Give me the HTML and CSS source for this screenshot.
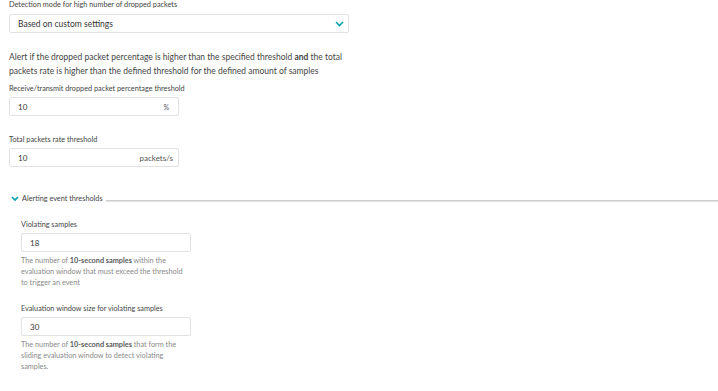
FILE: index.html
```html
<!DOCTYPE html>
<html>
<head>
<meta charset="utf-8">
<link rel="stylesheet" href="styles.css">
</head>
<body>
<div class="page">
  <div class="label">Detection mode for high number of dropped packets</div>
  <div class="select">
    <span>Based on custom settings</span>
    <svg class="chev" width="9" height="6" viewBox="0 0 9 6"><path d="M1 1 L4.5 4.5 L8 1" fill="none" stroke="#00a1b2" stroke-width="1.6"/></svg>
  </div>
  <p class="desc">Alert if the dropped packet percentage is higher than the specified threshold <b>and</b> the total packets rate is higher than the defined threshold for the defined amount of samples</p>

  <div class="label l2">Receive/transmit dropped packet percentage threshold</div>
  <div class="input narrow"><span>10</span><span class="unit">%</span></div>

  <div class="label l3">Total packets rate threshold</div>
  <div class="input narrow"><span>10</span><span class="unit big">packets/s</span></div>

  <div class="section">
    <svg class="schev" width="8" height="6" viewBox="0 0 8 6"><path d="M1 1 L4 4 L7 1" fill="none" stroke="#00a1b2" stroke-width="1.6"/></svg>
    <span class="stitle">Alerting event thresholds</span>
    <span class="rule"></span>
  </div>

  <div class="sub">
    <div class="label s1">Violating samples</div>
    <div class="input sub-in"><span>18</span></div>
    <p class="help">The number of <b>10-second samples</b> within the evaluation window that must exceed the threshold to trigger an event</p>

    <div class="label s2">Evaluation window size for violating samples</div>
    <div class="input sub-in"><span>30</span></div>
    <p class="help">The number of <b>10-second samples</b> that form the sliding evaluation window to detect violating samples.</p>
  </div>
</div>
</body>
</html>
```
FILE: styles.css
```css
html, body {
  margin: 0;
  padding: 0;
  background: #ffffff;
}
body {
  font-family: Lato, "Open Sans", sans-serif;
  color: #454646;
}
.page {
  padding: 0 0 0 9px;
}
.label {
  font-size: 7.3px;
  line-height: 10px;
  height: 10px;
  margin-bottom: 4px;
  color: #454646;
}
.select {
  box-sizing: border-box;
  width: 340px;
  height: 19px;
  border: 1px solid #e2e2e2;
  border-radius: 2px;
  display: flex;
  align-items: center;
  justify-content: space-between;
  padding: 0 4px 0 8px;
  font-size: 8.5px;
  color: #353535;
}
.chev {
  display: block;
}
.desc {
  margin: 17px 0 0 0;
  width: 345px;
  font-size: 8.5px;
  line-height: 14px;
  color: #454646;
}
.desc b {
  font-weight: 700;
}
.l2 {
  margin-top: 6px;
}
.input {
  box-sizing: border-box;
  height: 19px;
  border: 1px solid #e2e2e2;
  border-radius: 2px;
  display: flex;
  align-items: center;
  justify-content: space-between;
  padding: 0 5px 0 8px;
  font-size: 8px;
  color: #353535;
}
.l2 + .input {
  margin-top: -1px;
}
.narrow {
  width: 170px;
}
.unit {
  font-size: 7px;
  padding-right: 4px;
  color: #555;
}
.unit.big {
  font-size: 8px;
  padding-right: 0;
}
.l3 {
  margin-top: 19px;
}
.l3 + .input {
  margin-top: -1px;
}
.section {
  margin-top: 27px;
  height: 10px;
  display: flex;
  align-items: center;
  padding-left: 2px;
}
.schev {
  display: block;
  margin-right: 3px;
}
.stitle {
  font-size: 7.3px;
  line-height: 10px;
  color: #454646;
  white-space: nowrap;
}
.rule {
  flex: 1;
  height: 1px;
  border-top: 1px solid #cfcfcf;
  background: #e4e4e4;
  margin-left: 3px;
  margin-top: 3px;
}
.sub {
  padding-left: 12px;
}
.s1 {
  margin-top: 16px;
  margin-bottom: 3px;
}
.sub-in {
  width: 170px;
}
.help {
  margin: 3px 0 0 0;
  width: 166px;
  font-size: 7.3px;
  line-height: 11px;
  color: #8a8a8a;
}
.help b {
  color: #5a5a5a;
  font-weight: 700;
}
.s2 {
  margin-top: 16px;
  margin-bottom: 3px;
}
```
